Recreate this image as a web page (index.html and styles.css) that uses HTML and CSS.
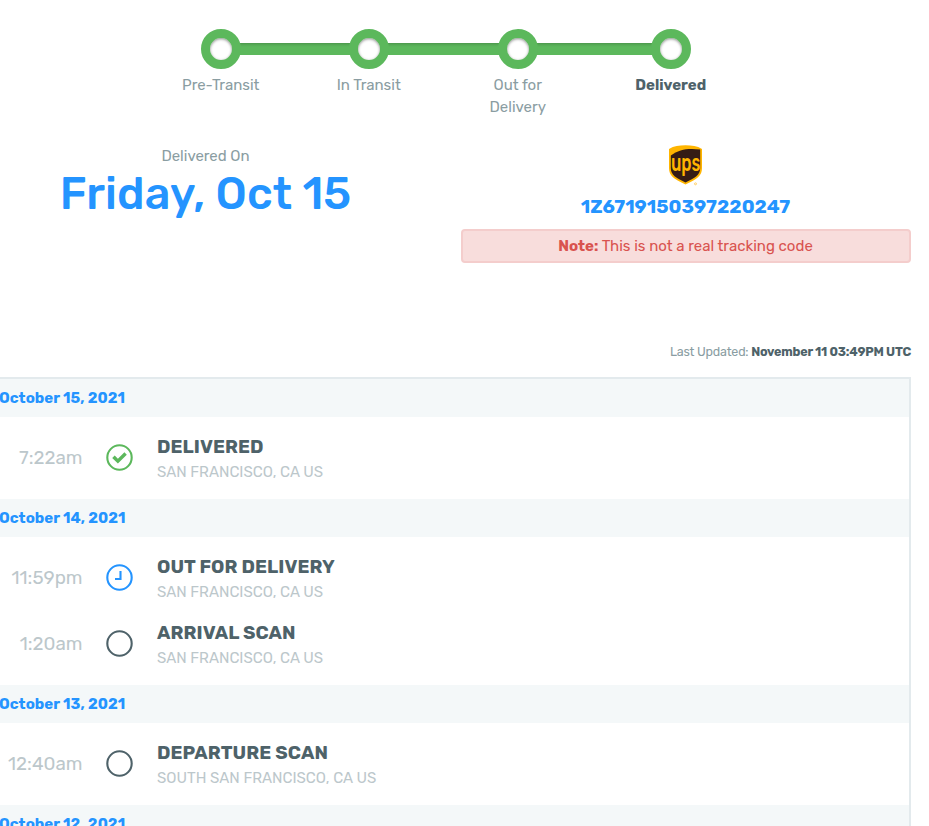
FILE: index.html
```html
<!DOCTYPE html>
<html lang="en">
<head>
<meta charset="utf-8">
<title>Tracking details</title>
<link rel="stylesheet" href="styles.css">
</head>
<body>
<main class="tracker">
  <ol class="steps">
    <li class="step"><div class="rail"><i class="line none"></i><i class="dot"></i><i class="line"></i></div><span class="label">Pre-Transit</span></li>
    <li class="step"><div class="rail"><i class="line"></i><i class="dot"></i><i class="line"></i></div><span class="label">In Transit</span></li>
    <li class="step"><div class="rail"><i class="line"></i><i class="dot"></i><i class="line"></i></div><span class="label">Out for<br>Delivery</span></li>
    <li class="step"><div class="rail"><i class="line"></i><i class="dot"></i><i class="line none"></i></div><span class="label current">Delivered</span></li>
  </ol>

  <section class="summary">
    <div class="arrival">
      <span class="arrival-label">Delivered On</span>
      <strong class="arrival-date">Friday, Oct 15</strong>
    </div>
    <div class="carrier">
      <svg class="ups" viewBox="0 0 35 41" role="img" aria-label="UPS">
        <path fill="#ffb500" d="M1 4C6 1 11 0.300 17.500 0.300S29 1 34 4V23C34 31 29 34 17.500 39.500C6 34 1 31 1 23Z"/>
        <path fill="#351c15" d="M2.800 10.500C11 4 21 3 32.200 4.500V23C32.200 30 27 33 17.500 37.500C8 33 2.800 30 2.800 23Z"/>
        <text class="ups-word" x="3" y="26.300" textLength="29.500" lengthAdjust="spacingAndGlyphs">ups</text>
        <circle cx="27.500" cy="38.800" r="1" fill="none" stroke="#ffc84a" stroke-width=".8"/>
      </svg>
      <a class="code">1Z6719150397220247</a>
      <p class="note"><b>Note:</b> This is not a real tracking code</p>
    </div>
  </section>

  <p class="updated">Last Updated: <b class="updated-value">November 11 03:49PM UTC</b></p>

  <section class="history">
    <h2 class="day">October 15, 2021</h2>
    <div class="events">
      <div class="event">
        <time class="time">7:22am</time>
        <svg class="icon done" viewBox="0 0 28 28"><circle cx="13.500" cy="13.500" r="12.200"/><path class="solid" d="M6.200 14L8.700 11.500L11.900 14.700L18.400 8.300L20.800 10.700L11.900 19.600Z"/></svg>
        <div class="detail"><b class="title">DELIVERED</b><span class="place">SAN FRANCISCO, CA US</span></div>
      </div>
    </div>
    <h2 class="day">October 14, 2021</h2>
    <div class="events">
      <div class="event">
        <time class="time">11:59pm</time>
        <svg class="icon moving" viewBox="0 0 28 28"><circle cx="13.500" cy="13.500" r="12.200"/><path d="M14.500 7V15H9"/></svg>
        <div class="detail"><b class="title">OUT FOR DELIVERY</b><span class="place">SAN FRANCISCO, CA US</span></div>
      </div>
      <div class="event">
        <time class="time">1:20am</time>
        <svg class="icon" viewBox="0 0 28 28"><circle cx="13.500" cy="13.500" r="12.200"/></svg>
        <div class="detail"><b class="title">ARRIVAL SCAN</b><span class="place">SAN FRANCISCO, CA US</span></div>
      </div>
    </div>
    <h2 class="day">October 13, 2021</h2>
    <div class="events">
      <div class="event">
        <time class="time">12:40am</time>
        <svg class="icon" viewBox="0 0 28 28"><circle cx="13.500" cy="13.500" r="12.200"/></svg>
        <div class="detail"><b class="title">DEPARTURE SCAN</b><span class="place">SOUTH SAN FRANCISCO, CA US</span></div>
      </div>
    </div>
    <h2 class="day">October 12, 2021</h2>
  </section>
</main>
</body>
</html>
```
FILE: styles.css
```css
* {
  box-sizing: border-box;
}

body {
  margin: 0;
  height: 826px;
  overflow: hidden;
  background: #fff;
  color: #8a9da2;
  font: 15px/22px Rubik, Roboto, sans-serif;
}

.tracker {
  width: 930px;
  margin-left: -19px;
  padding-top: 29px;
}

.steps {
  display: grid;
  grid-template-columns: 148px 148px 150px 156px;
  height: 116px;
  margin: 0;
  padding: 0 0 0 166px;
  list-style: none;
}

.step {
  display: flex;
  flex-direction: column;
  align-items: center;
}

.rail {
  display: flex;
  align-items: center;
  align-self: stretch;
  height: 40px;
  margin-bottom: 5px;
}

.line {
  flex: 1;
  height: 12px;
  background: linear-gradient(#4c984c, #56ac56 2px, #5cb85c 4px);
}

.line:first-child {
  margin-right: -2px;
}

.line:last-child {
  margin-left: -2px;
}

.line.none {
  visibility: hidden;
}

.dot {
  position: relative;
  z-index: 1;
  width: 40px;
  height: 40px;
  border: 9px solid #5cb85c;
  border-radius: 50%;
  background: #fff;
  box-shadow: inset 0 1px 3px rgba(0, 0, 0, .45);
}

.label {
  margin-left: -.5px;
  text-align: center;
}

.current {
  color: #4e6269;
  font-weight: 700;
}

.summary {
  display: grid;
  grid-template-columns: 450px 450px;
  gap: 30px;
  height: 196px;
}

.arrival,
.carrier {
  display: flex;
  flex-direction: column;
  align-items: center;
}

.arrival-label {
  margin-left: -1px;
}

.arrival-date {
  margin-left: -1px;
  color: #2494ff;
  font-size: 45px;
  font-weight: 500;
  letter-spacing: .06px;
  line-height: 54px;
}

.ups {
  width: 35px;
  height: 41px;
  margin-left: -2px;
}

.ups-word {
  fill: #ffb500;
  font: 500 25px Rubik, sans-serif;
}

.code {
  margin: 10px 0 0 -1px;
  color: #2494ff;
  font-size: 19px;
  font-weight: 700;
}

.note {
  width: 100%;
  height: 34px;
  margin: 11px 0 0;
  padding: 4px 5px 4px 4px;
  border: 2px solid #f4cdcc;
  border-radius: 4px;
  background: #f8dddc;
  color: #d9534f;
  text-align: center;
}

.updated {
  height: 36px;
  margin: 0;
  font-size: 12.5px;
  letter-spacing: -.22px;
  text-align: right;
}

.updated-value {
  color: #4e6269;
}

.history {
  border: 2px solid #e3eaed;
}

.day {
  height: 38px;
  margin: 0;
  padding: 8px 16px;
  background: #f4f8f9;
  color: #2494ff;
  font-size: 15px;
  font-weight: 700;
  letter-spacing: .04px;
}

.events {
  padding: 8px 0;
}

.event {
  display: grid;
  grid-template-columns: 99.5px 28px 1fr;
  column-gap: 23px;
  align-items: center;
  height: 66px;
}

.time {
  color: #bcc7cb;
  font-size: 18.75px;
  text-align: right;
}

.icon {
  width: 28px;
  height: 28px;
  fill: none;
  stroke: #4e6269;
  stroke-width: 2.1;
}

.detail {
  display: flex;
  flex-direction: column;
  padding: 3px 0 0 .5px;
}

.title {
  color: #4e6269;
  font-size: 18.75px;
  letter-spacing: .06px;
  line-height: 24px;
}

.place {
  color: #bcc7cb;
  line-height: 26px;
}

.done {
  stroke: #5cb85c;
}

.moving {
  stroke: #2494ff;
}

.solid {
  fill: #5cb85c;
  stroke: none;
}
```
